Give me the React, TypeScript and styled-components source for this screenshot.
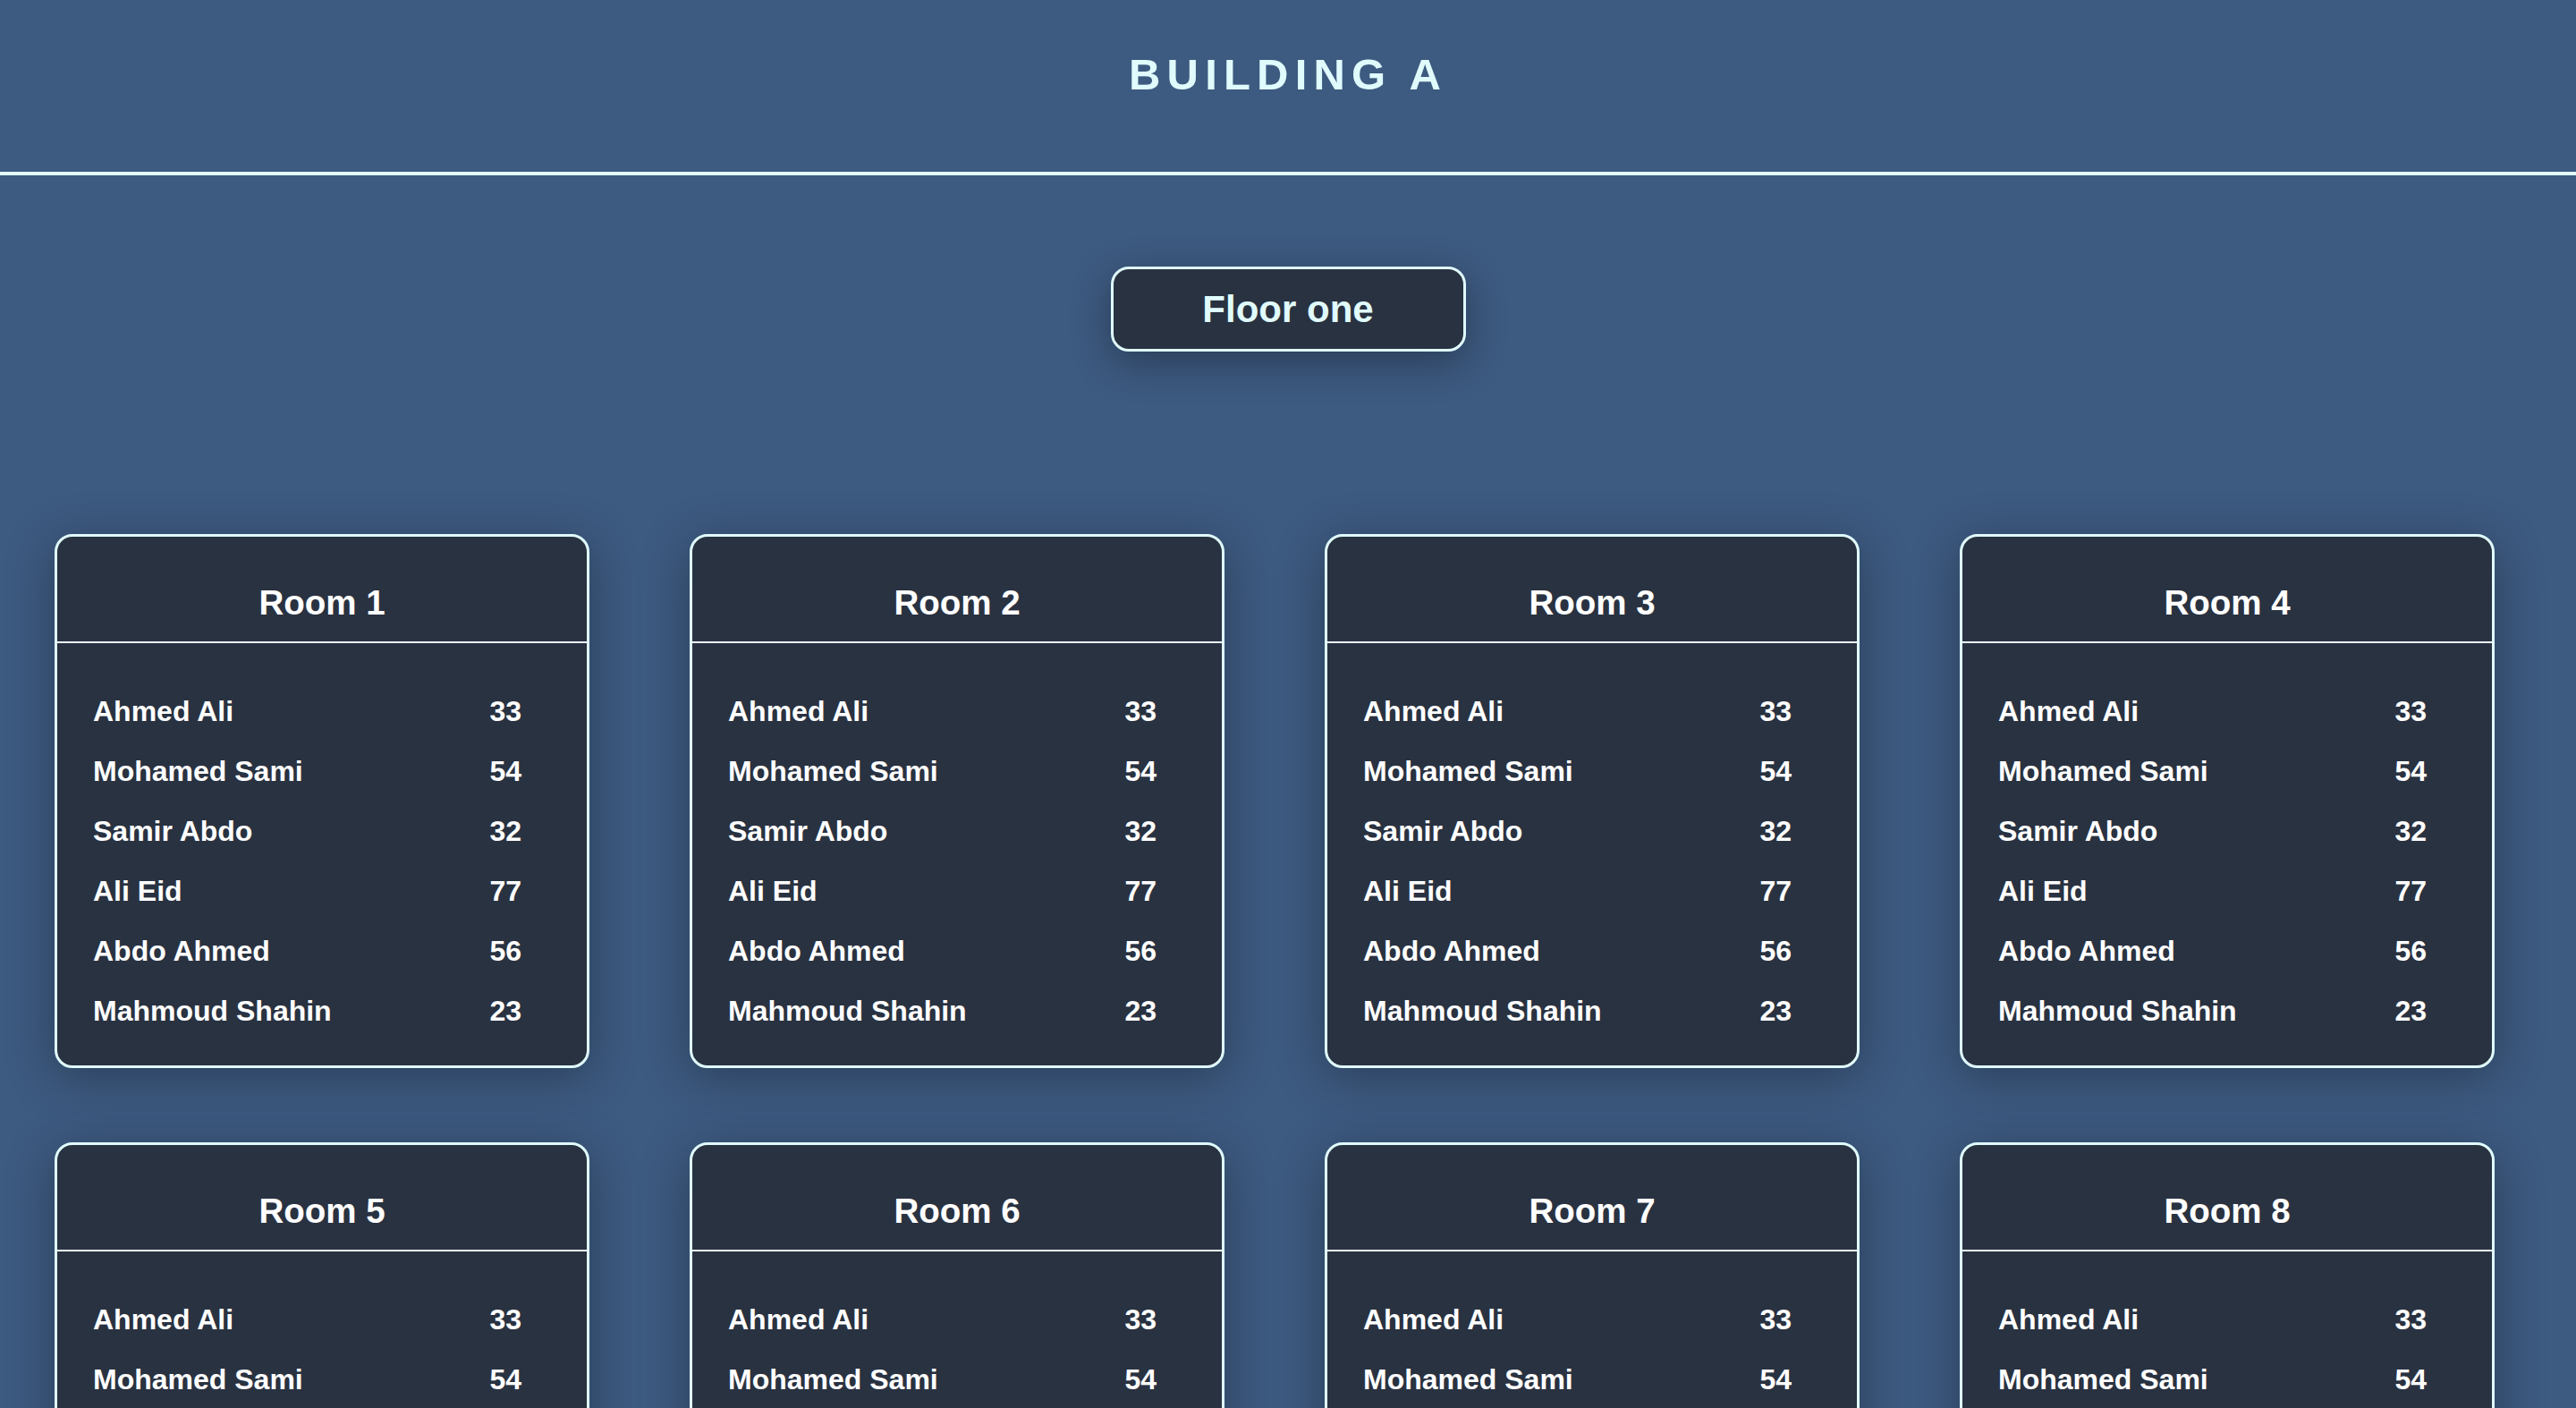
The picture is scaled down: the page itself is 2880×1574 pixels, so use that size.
import React from "react";
import styled, { createGlobalStyle } from "styled-components";

const GlobalStyle = createGlobalStyle`
  html, body {
    margin: 0;
    padding: 0;
    background: #3d5a80;
  }
  body {
    font-family: "Liberation Sans", Arial, Helvetica, sans-serif;
    -webkit-font-smoothing: antialiased;
  }
  * { box-sizing: border-box; }
`;

const Page = styled.div`
  min-height: 100vh;
  background: #3d5a80;
  padding-bottom: 120px;
`;

const Header = styled.header`
  height: 196px;
  padding-top: 55px;
  border-bottom: 4px solid #e0fbfc;
  text-align: center;
`;

const Title = styled.h1`
  margin: 0;
  font-size: 49px;
  font-weight: 700;
  letter-spacing: 7.2px;
  color: #e0fbfc;
  line-height: normal;
`;

const FloorSection = styled.section`
  display: flex;
  flex-direction: column;
  align-items: center;
  padding-top: 102px;
`;

const FloorButton = styled.button`
  width: 397px;
  height: 95px;
  border: 3px solid #e0fbfc;
  border-radius: 20px;
  background: #293241;
  color: #e0fbfc;
  font-family: "Liberation Sans", Arial, Helvetica, sans-serif;
  font-size: 42px;
  font-weight: 700;
  line-height: normal;
  box-shadow: 0 12px 45px rgba(0, 0, 0, 0.32);
  cursor: pointer;
`;

const Grid = styled.div`
  align-self: stretch;
  display: grid;
  grid-template-columns: repeat(4, 598px);
  column-gap: 112px;
  row-gap: 83px;
  padding-left: 61px;
  margin-top: 204px;
`;

const Card = styled.article`
  background: #293241;
  border: 3px solid #e0fbfc;
  border-radius: 20px;
  box-shadow: 0 10px 55px rgba(0, 0, 0, 0.3);
  overflow: hidden;
`;

const CardHeader = styled.div`
  height: 119px;
  padding-top: 52px;
  border-bottom: 2px solid #f2fdfe;
  text-align: center;
`;

const RoomName = styled.h2`
  margin: 0;
  font-size: 38.5px;
  font-weight: 700;
  color: #ffffff;
  line-height: normal;
`;

const PeopleList = styled.ul`
  list-style: none;
  margin: 0;
  padding: 43px 73px 27px 40px;
`;

const Person = styled.li`
  display: grid;
  grid-template-columns: 1fr auto;
  height: 67px;
  line-height: 67px;
  font-size: 32px;
  font-weight: 700;
  color: #ffffff;
`;

const Age = styled.span`
  text-align: right;
`;

const people: [string, number][] = [
  ["Ahmed Ali", 33],
  ["Mohamed Sami", 54],
  ["Samir Abdo", 32],
  ["Ali Eid", 77],
  ["Abdo Ahmed", 56],
  ["Mahmoud Shahin", 23],
];

const rooms = [1, 2, 3, 4, 5, 6, 7, 8];

export default function App() {
  return (
    <Page>
      <GlobalStyle />
      <Header>
        <Title>BUILDING A</Title>
      </Header>
      <FloorSection>
        <FloorButton>Floor one</FloorButton>
        <Grid>
          {rooms.map((r) => (
            <Card key={r}>
              <CardHeader>
                <RoomName>Room {r}</RoomName>
              </CardHeader>
              <PeopleList>
                {people.map(([name, age]) => (
                  <Person key={name}>
                    <span>{name}</span>
                    <Age>{age}</Age>
                  </Person>
                ))}
              </PeopleList>
            </Card>
          ))}
        </Grid>
      </FloorSection>
    </Page>
  );
}
